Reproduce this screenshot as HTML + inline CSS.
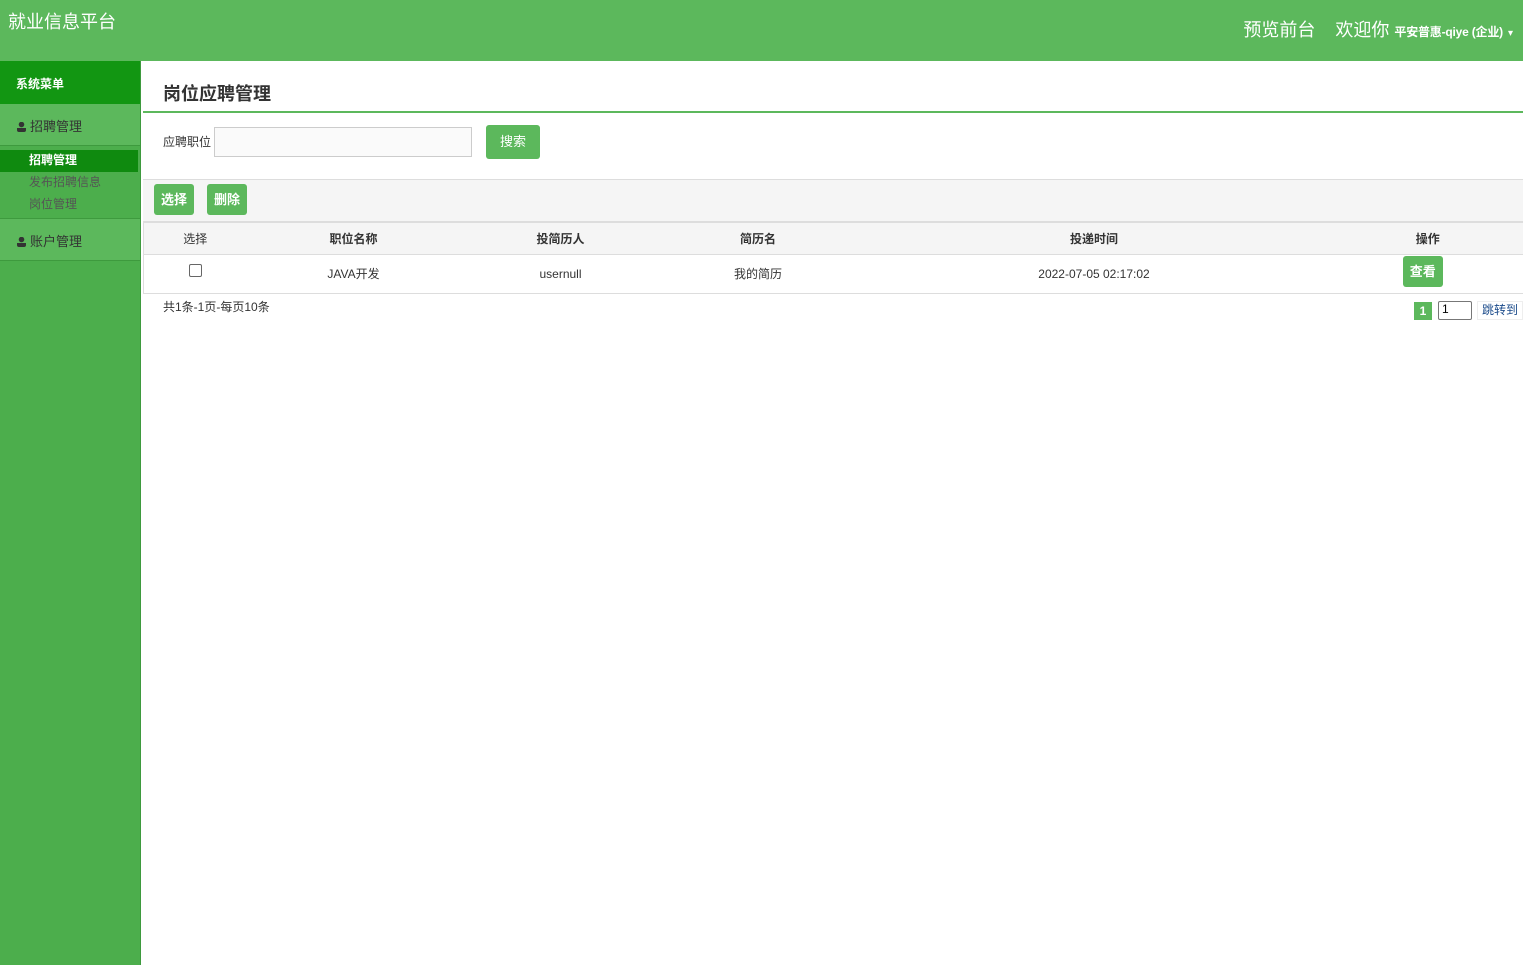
<!DOCTYPE html>
<html><head><meta charset="utf-8"><style>
*{margin:0;padding:0;box-sizing:border-box}
body{width:1523px;height:965px;overflow:hidden;background:#fff;font-family:"Liberation Sans","Noto Sans CJK SC",sans-serif;font-size:12px;color:#333;position:relative}
.hdr{position:absolute;left:0;top:0;width:1523px;height:61px;background:#5cb85c;color:#fff}
.logo{position:absolute;left:8px;top:8px;font-size:18px}
.rt{position:absolute;right:10px;top:16px;font-size:18px;white-space:nowrap}
.rt b{font-size:12px;letter-spacing:-0.2px}
.side{position:absolute;left:0;top:61px;width:141px;height:904px;background:#4cae4c;border-right:1px solid #3e9a3e}
.sh{height:43px;background:#129612;color:#fff;font-weight:bold;padding:14px 0 0 16px;font-size:12px}
.si{height:42px;background:#5cb85c;border-bottom:1px solid #3e9a3e;padding:12px 0 0 17px;color:#333;font-size:13px}
.si i{display:inline-block;width:9px;height:10px;vertical-align:-1px;margin-right:4px;background:radial-gradient(circle at 50% 25%,#333 2.5px,transparent 3px),linear-gradient(#333,#333) 0 6px/9px 4px no-repeat;border-radius:2px}
.sub{height:73px;padding-top:4px;border-bottom:1px solid #3e9a3e}
.sub div{height:22px;line-height:21px;padding-left:29px;color:#555;font-size:12px}
.sub .act{background:#0f8a0f;color:#fff;font-weight:bold;width:138px}
.main{position:absolute;left:143px;top:61px;right:0}
h2{font-size:18px;color:#333;padding:19px 0 0 20px;height:52px;border-bottom:2px solid #5cb85c}
.srch{height:66px;position:relative}
.srch span{position:absolute;left:20px;top:20px}
.srch .in{position:absolute;left:71px;top:14px;width:258px;height:30px;border:1px solid #ccc;background:#fafafa}
.btn{position:absolute;background:#5cb85c;color:#fff;border-radius:3px;text-align:center;font-weight:bold;font-size:13px}
.tb{height:44px;background:#f5f5f5;border-top:1px solid #ddd;border-bottom:2px solid #ddd;position:relative}
table{width:100%;border-collapse:collapse}
th{height:31px;background:#f5f5f5;font-weight:bold;border-bottom:1px solid #ddd}
th:first-child{font-weight:normal}
td{height:39px;text-align:center;border-bottom:1px solid #ddd}
.pg{position:relative;height:40px}
</style></head><body>
<div class="hdr"><div class="logo">就业信息平台</div>
<div class="rt">预览前台 &nbsp;&nbsp; 欢迎你 <b>平安普惠-qiye (企业)</b> <span style="font-size:10px">▾</span></div></div>
<div class="side"><div class="sh">系统菜单</div>
<div class="si"><i></i>招聘管理</div>
<div class="sub"><div class="act">招聘管理</div><div>发布招聘信息</div><div>岗位管理</div></div>
<div class="si"><i></i>账户管理</div></div>
<div class="main">
<h2>岗位应聘管理</h2>
<div class="srch"><span>应聘职位</span><div class="in"></div><div class="btn" style="left:343px;top:12px;width:54px;height:34px;line-height:34px;font-weight:normal">搜索</div></div>
<div class="tb"><div class="btn" style="left:11px;top:4px;width:40px;height:31px;line-height:31px">选择</div><div class="btn" style="left:64px;top:4px;width:40px;height:31px;line-height:31px">删除</div></div>
<table style="border-left:1px solid #ddd"><tr><th style="width:103px">选择</th><th style="width:214px">职位名称</th><th style="width:200px">投简历人</th><th style="width:195px">简历名</th><th style="width:477px">投递时间</th><th>操作</th></tr>
<tr><td><span style="display:inline-block;width:13px;height:13px;border:1px solid #666;border-radius:2px;vertical-align:3px"></span></td><td>JAVA开发</td><td>usernull</td><td>我的简历</td><td>2022-07-05 02:17:02</td><td><span class="btn" style="position:relative;display:inline-block;width:40px;height:31px;line-height:31px;left:-5px;top:-2px">查看</span></td></tr></table>
<div class="pg"><span style="position:absolute;left:20px;top:4px">共1条-1页-每页10条</span>
<span style="position:absolute;left:1271px;top:8px;width:18px;height:18px;background:#5cb85c;color:#fff;font-weight:bold;text-align:center;line-height:18px">1</span>
<span style="position:absolute;left:1295px;top:7px;width:34px;height:19px;border:1px solid #777;border-radius:2px;padding-left:3px;color:#000">1</span>
<span style="position:absolute;left:1334px;top:7px;width:46px;height:19px;border:1px solid #eee;color:#1a4a8a;text-align:center;line-height:17px">跳转到</span></div>
</div>
</body></html>
